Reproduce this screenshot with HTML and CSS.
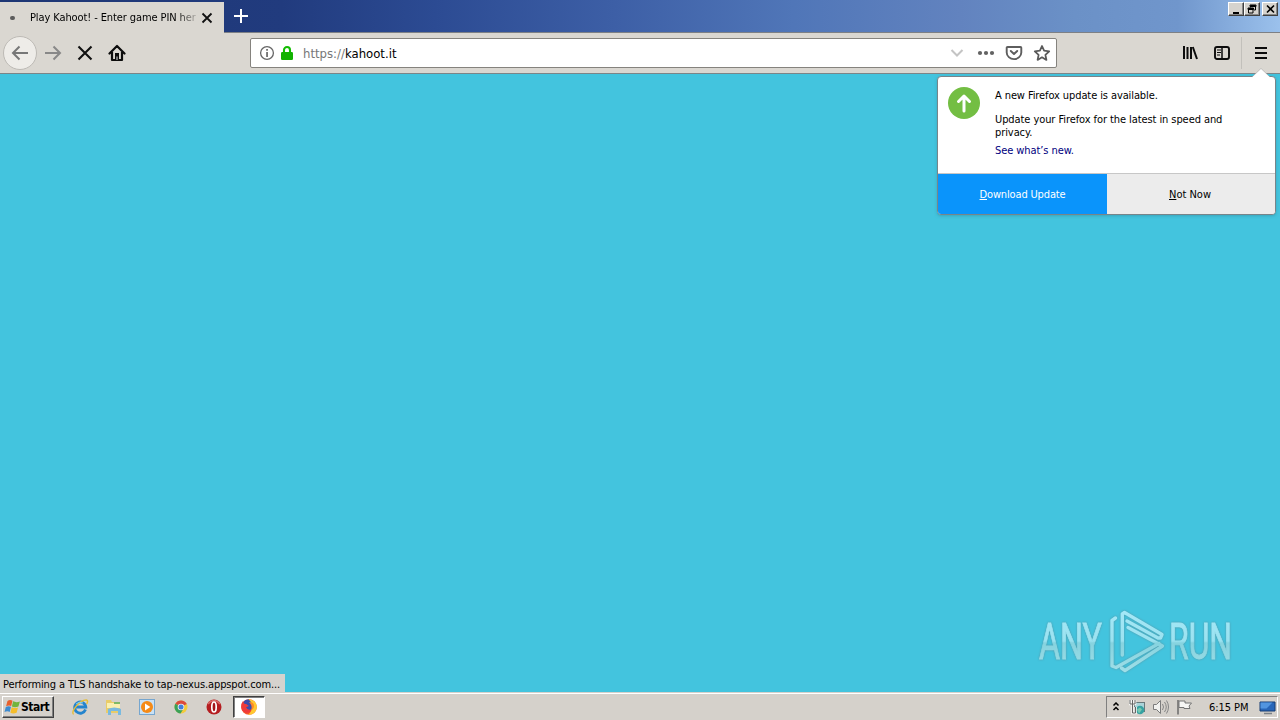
FILE: index.html
```html
<!DOCTYPE html>
<html lang="en">
<head>
<meta charset="utf-8">
<title>Play Kahoot! - Enter game PIN here!</title>
<link rel="stylesheet" href="styles.css">
</head>
<body>
<div class="screen">
  <header class="tabbar">
    <div class="tab">
      <span class="throbber"></span>
      <span class="tab-title">Play Kahoot! - Enter game PIN her</span>
      <svg class="tab-close" width="12" height="12" viewBox="0 0 12 12"><path d="M1.5 1.5l9 9M10.500 1.500l-9 9" stroke="#111" stroke-width="1.8"/></svg>
    </div>
    <svg class="new-tab" width="14" height="14" viewBox="0 0 14 14"><path d="M7 0v14M0 7h14" stroke="#fff" stroke-width="2"/></svg>
    <div class="window-buttons">
      <span class="wb"><svg width="13" height="11" viewBox="0 0 13 11"><path d="M3 8h6v2H3z"/></svg></span>
      <span class="wb"><svg width="13" height="11" viewBox="0 0 13 11"><path d="M4.500 3.500V1.500h5v4.500H8M4 1h6v1.500H4zM2.500 4.500h4.500v4.500H2.500zM2 4h5.500v1.500H2z" fill="none" stroke="#000"/></svg></span>
      <span class="wb last"><svg width="13" height="11" viewBox="0 0 13 11"><path d="M3 1.500l7 7M10 1.500l-7 7" stroke="#000" stroke-width="1.600"/></svg></span>
    </div>
  </header>

  <nav class="toolbar">
    <div class="nav-left">
      <span class="back"><svg width="18" height="16" viewBox="0 0 18 16"><path d="M17 8H2M8.500 1.500L2 8l6.500 6.500" fill="none" stroke="#777" stroke-width="2"/></svg></span>
      <svg class="forward" width="18" height="16" viewBox="0 0 18 16"><path d="M1 8h15M9.500 1.500L16 8l-6.500 6.500" fill="none" stroke="#888" stroke-width="2"/></svg>
      <svg class="stop" width="16" height="16" viewBox="0 0 16 16"><path d="M1.500 1.500l13 13M14.500 1.500l-13 13" stroke="#111" stroke-width="2.100"/></svg>
      <svg class="home" width="18" height="18" viewBox="0 0 18 18"><path d="M1.500 9.500L9 2l7.500 7.500M4 8v8h10V8" fill="none" stroke="#0c0c0c" stroke-width="2.200" stroke-linecap="round" stroke-linejoin="round"/><path d="M7 9h4v7H7z" fill="#0c0c0c"/><path d="M8.500 12.500h1V16h-1z" fill="#ddd"/></svg>
    </div>
    <div class="urlbar">
      <svg width="16" height="16" viewBox="0 0 16 16"><circle cx="8" cy="8" r="6.400" fill="none" stroke="#666" stroke-width="1.300"/><path d="M7.200 4h1.700v1.700H7.200zM7.200 7h1.700v5H7.200z" fill="#666"/></svg>
      <svg class="lock" width="14" height="16" viewBox="0 0 14 16"><path d="M4 7V5a3 3 0 0 1 6 0v2" fill="none" stroke="#12bc00" stroke-width="2.100"/><rect x="1" y="7" width="12" height="8" rx="1.200" fill="#12b200"/></svg>
      <span class="url"><span class="scheme">https://</span>kahoot.it</span>
      <svg class="chev" width="14" height="10" viewBox="0 0 14 10"><path d="M1.500 2L7 7.500 12.500 2" fill="none" stroke="#c4c4c4" stroke-width="2"/></svg>
      <svg class="dots" width="18" height="6" viewBox="0 0 18 6" fill="#626262"><circle cx="3" cy="3" r="2.100"/><circle cx="9" cy="3" r="2.100"/><circle cx="15" cy="3" r="2.100"/></svg>
      <svg class="pocket" width="18" height="16" viewBox="0 0 18 16" fill="none" stroke="#5e5e5e" stroke-width="1.900" stroke-linejoin="round" stroke-linecap="round"><path d="M2.500 2h13q.8 0 .8.800V7.500a7.300 6.600 0 0 1-14.600 0V2.800q0-.8.800-.8z"/><path d="M5.800 6L9 9l3.200-3"/></svg>
      <svg class="star" width="18" height="18" viewBox="0 0 18 18"><path d="M9 2l2.100 4.700 5.100.6-3.800 3.500 1 5.100L9 13.300l-4.400 2.600 1-5.100L1.800 7.300l5.100-.6z" fill="none" stroke="#5a5a5a" stroke-width="1.800" stroke-linejoin="round"/></svg>
    </div>
    <div class="nav-right">
      <svg class="library" width="16" height="16" viewBox="0 0 16 16"><path d="M2 1v13M5.500 2v12M9 2v12M10.800 2l4.200 12" fill="none" stroke="#0c0c0c" stroke-width="2"/></svg>
      <svg class="sidebar" width="16" height="16" viewBox="0 0 16 16"><rect x="1" y="2" width="14" height="12" rx="2" fill="none" stroke="#0c0c0c" stroke-width="1.900"/><path d="M8 2v12" stroke="#0c0c0c" stroke-width="1.500"/><path d="M3 5h4M3 7.500h4M3 10h3" stroke="#0c0c0c"/></svg>
      <span class="divider"></span>
      <svg class="menu" width="12" height="12" viewBox="0 0 12 12"><path d="M0 1h12M0 6h12M0 11h12" stroke="#0c0c0c" stroke-width="2"/></svg>
    </div>
  </nav>

  <main class="page">
    <svg class="watermark" width="204" height="66" viewBox="0 0 204 66">
      <defs><linearGradient id="wm" gradientUnits="userSpaceOnUse" x1="0" y1="0" x2="0" y2="64"><stop offset="0" stop-color="#a5e8f7"/><stop offset=".5" stop-color="#9be2f0"/><stop offset=".53" stop-color="#86d3df"/><stop offset="1" stop-color="#a0dfe8"/></linearGradient></defs>
      <g class="wm-text" fill="url(#wm)" stroke="url(#wm)" stroke-width=".9"><text x="3" y="50" textLength="63" lengthAdjust="spacingAndGlyphs">ANY</text><text x="133" y="50" textLength="63" lengthAdjust="spacingAndGlyphs">RUN</text></g>
      <g fill="none" stroke="url(#wm)" stroke-width="3.400" stroke-linecap="round" stroke-linejoin="round"><path d="M79.500 9l-3.500 2.500V57l4 1.500L123 34.500"/><path d="M86.300 46V5l2.200-1.500L126 25.500l-1.500 3.500h-2.500L91 12"/><path d="M92 18.500L126.500 37 89 61.500l-3.500-2.500"/></g>
    </svg>
    <div class="status">Performing a TLS handshake to tap-nexus.appspot.com...</div>
  </main>

  <footer class="taskbar">
    <div class="start">
      <svg width="17" height="16" viewBox="0 0 16 16"><path d="M3 2Q5.500.3 8 1.800L6.700 7Q4.500 5.700 1.600 7.200z" fill="#e8602c"/><path d="M8.600 2.300q3.200 1.600 6.800.1L13.900 7.600q-3.600 1.300-6.500-.1z" fill="#72b43c"/><path d="M1.300 7.900Q4.200 6.600 6.500 7.800L5.200 13Q3 11.600 0 13z" fill="#3d8bd0"/><path d="M7.200 8.300q2.800 1.300 6.300.1l-1.400 5.300q-3.400 1.500-6.200 0z" fill="#f5bd2b"/></svg>
      <span>Start</span>
    </div>
    <div class="launchers">
      <span class="app"><svg width="18" height="18" viewBox="0 0 18 18"><path d="M14.500 11.500A5.600 5.600 0 1 1 14.800 9H5" fill="none" stroke="#2484cd" stroke-width="2.800"/><path d="M2.500 16.500C-1 14 9 1.500 15.500 2q2 .7.200 4" fill="none" stroke="#e6bd38" stroke-width="1.500"/><path d="M5 6q3-3 7-1" fill="none" stroke="#7fd0f4"/></svg></span>
      <span class="app"><svg width="18" height="18" viewBox="0 0 18 18"><path d="M1 2h5l1 2h8v11H1z" fill="#e9cc69"/><path d="M2 5h13v5H2z" fill="#faf0b0"/><path d="M9 4h6v2H9z" fill="#7fba68"/><path d="M3 17v-6q6-3 13 0v6h-3v-4H6v4z" fill="#79bae0"/></svg></span>
      <span class="app"><svg width="18" height="18" viewBox="0 0 18 18"><rect x="1.500" y="1.500" width="15" height="15" fill="#c9e1f5" stroke="#76a6cf"/><circle cx="9" cy="9" r="6" fill="#f58a17"/><path d="M7 5.500v7L12.300 9z" fill="#fff"/></svg></span>
      <span class="app"><svg width="18" height="18" viewBox="0 0 18 18"><circle cx="9" cy="9" r="6.500" fill="#f3cb3c"/><path d="M9 9L3.300 5.800A6.500 6.500 0 0 1 14.800 6z" fill="#dc4a3d"/><path d="M9 9L3.300 5.800A6.500 6.500 0 0 0 8.500 15.500l2.500-4z" fill="#3ba158"/><circle cx="9" cy="9" r="3.300" fill="#f1f1f1"/><circle cx="9" cy="9" r="2.500" fill="#427fdb"/></svg></span>
      <span class="app"><svg width="18" height="18" viewBox="0 0 18 18"><circle cx="9" cy="9" r="7.500" fill="#b51d20"/><path d="M3 6q6-7 12 0" fill="none" stroke="#d96a67" stroke-width="1.500"/><ellipse cx="9" cy="9" rx="2.200" ry="5" fill="#a31518" stroke="#fff" stroke-width="1.700"/></svg></span>
    </div>
    <div class="active-app"><svg width="18" height="18" viewBox="0 0 18 18"><circle cx="9" cy="9" r="7.800" fill="#f5532c"/><path d="M8.500 1Q18 3 16.800 10 15.500 17 8 16.800 14 13 8.500 1z" fill="#ffc930"/><path d="M2.500 6Q4 1.500 8.500 1.200 12 4 12.500 8q.5 4-3 5Q5 13 5 9l3-1-2-2z" fill="#3b4cab"/><path d="M1.200 9Q1.200 5 3 3q.5 3 3.500 3.500L9 8l-3 1q1.500 4 6 2-2 5-7 3.500Q1.500 13 1.200 9z" fill="#ee3a3a"/><path d="M9 4q4 4 2 8 3-1 3-4 0-4-5-4z" fill="#ff8a26"/></svg></div>
    <div class="tray">
      <svg class="tray-arrow" width="8" height="10" viewBox="0 0 8 10"><path d="M1.500 3.500L4 1l2.500 2.500M1.500 8L4 5.500 6.500 8" fill="none" stroke="#000" stroke-width="1.500"/></svg>
      <svg class="network" width="18" height="16" viewBox="0 0 18 16"><rect x="5.500" y="3.500" width="10" height="9" fill="#a9d3d8" stroke="#68787b"/><circle cx="11" cy="11" r="4.300" fill="#37a2a2"/><path d="M8 10.500l3-2 2 2-3 4z" fill="#78c8b0"/><path d="M1 1v4h5V1M3.500 1v13h3V8" fill="none" stroke="#f5f5f3" stroke-width="2.600"/><path d="M1 1v4h5V1M3.500 1v13h3V8" fill="none" stroke="#656565"/></svg>
      <svg class="sound" width="18" height="16" viewBox="0 0 18 16"><path d="M1.500 5.500h3l4-4v13l-4-4h-3z" fill="#f1f1ef" stroke="#7b7b7b"/><path d="M10.500 5q2 3 0 6M12.500 3q3.500 5 0 10M14.500 1.500q4 6.500 0 13" fill="none" stroke="#858585"/></svg>
      <svg class="flag" width="17" height="16" viewBox="0 0 17 16"><path d="M2 1v14.500" stroke="#6a6a6a" stroke-width="1.500"/><path d="M3 2h6v2h6.500l-2.500 3 1 2.500H8V8.500H3z" fill="#f6f6f4" stroke="#747474"/></svg>
      <span class="clock">6:15 PM</span>
      <svg class="desktop" width="17" height="15" viewBox="0 0 17 15"><path d="M1 2h15v9H1z" fill="#2866b8" stroke="#173c72"/><path d="M1.500 2.500h12l-6 6h-6z" fill="#5295df"/><path d="M5 13.500h8" stroke="#7b8187" stroke-width="1.500"/></svg>
    </div>
  </footer>

  <aside class="popup">
    <svg class="pointer" width="20" height="10" viewBox="0 0 20 10"><path d="M0 10L10 .5 20 10z" fill="#fff"/><path d="M1 9l9-8.500L19 9" fill="none" stroke="#999" stroke-opacity=".5"/></svg>
    <div class="popup-body">
      <svg class="update" width="32" height="32" viewBox="0 0 32 32"><circle cx="16" cy="16" r="16" fill="#73be43"/><path d="M16 24V9M10.500 14.500L16 9l5.500 5.500" fill="none" stroke="#fff" stroke-width="3" stroke-linecap="round" stroke-linejoin="round"/></svg>
      <div class="message">
        <p class="headline">A new Firefox update is available.</p>
        <p class="detail">Update your Firefox for the latest in speed and<br><span class="privacy">privacy.</span></p>
        <p class="link">See what’s new.</p>
      </div>
    </div>
    <div class="actions">
      <div class="primary"><span><u>D</u>ownload Update</span></div>
      <div class="secondary"><span><u>N</u>ot Now</span></div>
    </div>
  </aside>
</div>
</body>
</html>
```
FILE: styles.css
```css
* { box-sizing: border-box; }
body { margin: 0; }
svg { display: block; flex: none; }
p { margin: 0; }
.screen { position: relative; width: 1280px; height: 720px; overflow: hidden; display: flex; flex-direction: column; font: 11px/13px "DejaVu Sans Condensed", "DejaVu Sans", sans-serif; color: #000; white-space: nowrap; }

.tabbar { flex: none; height: 33px; display: flex; background: linear-gradient(90deg, #1d3674 0, #213b7e 22%, #2c4b93 34%, #3d5fa6 48%, #5076b8 62%, #6283bf 75%, #6b91c7 84%, #7096cc 92%, #9bc1ec 100%); border-bottom: 1px solid #7d8085; }
.tab { width: 224px; height: 31px; margin-top: 2px; padding-left: 10px; display: flex; align-items: center; background: #dad7d1; }
.throbber { width: 5px; height: 4px; border-radius: 2px; background: #5c5c5c; }
.tab-title { width: 166px; margin-left: 15px; letter-spacing: -0.1px; mask-image: linear-gradient(90deg, #000 88%, #0003 100%); }
.tab-close { margin-left: 5px; }
.new-tab { margin: 9px 0 0 10px; }
.window-buttons { margin: 2px 2px 0 auto; display: flex; }
.wb { width: 16px; height: 14px; padding: 1px; background: #d6d3ce; border: 1px solid; border-color: #fff #404040 #404040 #fff; box-shadow: inset -1px -1px #888; }
.last { margin-left: 2px; }

.toolbar { flex: none; height: 41px; display: flex; align-items: center; background: #dad7d1; border-bottom: 1px solid #7c8588; }
.nav-left { width: 250px; display: flex; align-items: center; padding-left: 3px; }
.back { width: 34px; height: 34px; border-radius: 50%; border: 1px solid #bdbab5; background: #eeece8; display: flex; align-items: center; justify-content: center; }
.forward { margin-left: 7px; }
.stop { margin-left: 15px; }
.home { margin-left: 15px; }
.urlbar { width: 807px; height: 30px; padding-left: 8px; display: flex; align-items: center; background: #fff; border: 1px solid #85837e; border-radius: 2px; }
.lock { margin-left: 5px; }
.url { width: 94px; margin-left: 9px; padding-top: 1px; font-size: 13px; line-height: 16px; letter-spacing: 0; }
.scheme { color: #777; }
.chev { margin-left: 553px; }
.dots { margin-left: 13px; }
.pocket { margin-left: 10px; }
.star { margin-left: 10px; }
.nav-right { display: flex; align-items: center; padding-left: 125px; }
.sidebar { margin-left: 16px; }
.divider { width: 1px; height: 32px; margin-left: 11px; background: #c2c0bb; }
.menu { margin-left: 13px; }

.page { flex: 1; position: relative; background: #43c4de; }
.watermark { position: absolute; left: 1036px; top: 535px; filter: drop-shadow(0 0 1px #5698a8); }
.wm-text { font: 50px Roboto, sans-serif; }
.status { position: absolute; left: 0; bottom: 0; width: 285px; height: 18px; padding: 4px 3px 0; background: #d6d3ce; letter-spacing: -0.12px; }

.taskbar { flex: none; height: 28px; display: flex; align-items: flex-start; padding: 4px 1px 2px 2px; background: #d5d1cb; box-shadow: inset 0 1px #d5d1cb, inset 0 2px #fff; }
.start { width: 52px; height: 22px; display: flex; align-items: center; padding-left: 1px; font-size: 12px; font-weight: bold; border: 1px solid; border-color: #fff #404040 #404040 #fff; box-shadow: inset -1px -1px #808080; letter-spacing: -0.5px; }
.launchers { display: flex; margin-left: 17px; gap: 15.600px; padding-top: 2px; }
.app { width: 18px; }
.active-app { width: 32px; height: 22px; margin-left: 10px; display: flex; justify-content: center; align-items: center; background: #fff; border: 1px solid; border-color: #404040 #fff #fff #404040; box-shadow: inset 1px 1px #808080; }
.tray { width: 172px; height: 22px; margin-left: auto; margin-right: 1px; display: flex; align-items: center; padding-left: 5px; border: 1px solid; border-color: #808080 #fff #fff #808080; }
.network { margin-left: 9px; }
.sound { margin-left: 5px; }
.flag { margin-left: 6px; }
.clock { width: 42px; margin-left: 16px; letter-spacing: -0.05px; }
.desktop { margin-left: 8px; }

.popup { position: absolute; left: 937px; top: 76px; width: 339px; height: 139px; background: #fff; border: 1px solid #77858a; border-radius: 4px; box-shadow: 0 1px 3px #32859780; }
.pointer { position: absolute; left: 313px; top: -9px; }
.popup-body { height: 96px; display: flex; padding: 10px; }
.message { margin-left: 15px; padding-top: 2px; }
.headline { letter-spacing: -0.1px; }
.detail { margin-top: 11px; letter-spacing: -0.08px; }
.link { margin-top: 5px; color: #000080; letter-spacing: -0.08px; }
.actions { height: 41px; display: flex; border-top: 1px solid #c7c7c7; border-radius: 0 0 3px 3px; overflow: hidden; }
.actions > div { display: flex; align-items: center; justify-content: center; }
.primary { width: 169px; background: #0a94fb; color: #fff; letter-spacing: -0.15px; }
.secondary { width: 168px; padding-right: 2px; background: #ececec; }
u { text-underline-offset: 1px; }
```
